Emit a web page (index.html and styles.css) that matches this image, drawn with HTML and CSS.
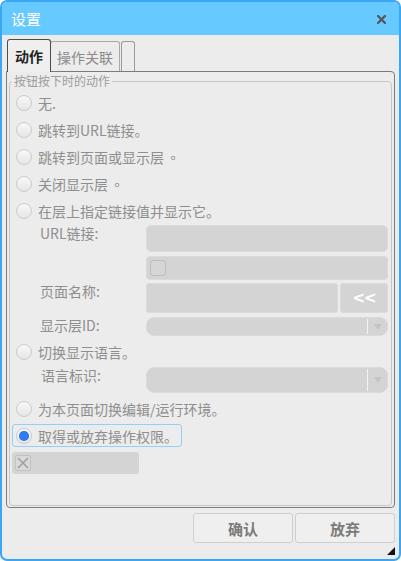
FILE: index.html
```html
<!DOCTYPE html>
<html lang="zh">
<head>
<meta charset="utf-8">
<title>设置</title>
<link rel="stylesheet" href="styles.css">
</head>
<body>
<div class="window">
  <div class="titlebar">
    <span class="title">设置</span>
    <svg class="close" width="9" height="9" viewBox="0 0 9 9"><path d="M1 1L8 8M8 1L1 8" stroke="#555" stroke-width="2.2" stroke-linecap="square"/></svg>
  </div>
  <div class="main">
    <div class="tabs">
      <div class="tab active">动作</div>
      <div class="tab second">操作关联</div>
      <div class="tab stub"></div>
    </div>
    <div class="panel">
      <fieldset class="group">
        <legend>按钮按下时的动作</legend>
        <div class="radio-row"><span class="radio"></span>无.</div>
        <div class="radio-row"><span class="radio"></span>跳转到URL链接。</div>
        <div class="radio-row"><span class="radio"></span>跳转到页面或显示层<span class="tc">。</span></div>
        <div class="radio-row"><span class="radio"></span>关闭显示层<span class="tc">。</span></div>
        <div class="radio-row"><span class="radio"></span>在层上指定链接值并显示它。</div>
        <div class="field url"><span class="label">URL链接:</span><div class="input"></div></div>
        <div class="field cb"><span class="label"></span><div class="input"><span class="checkbox"></span></div></div>
        <div class="field page"><span class="label">页面名称:</span><div class="input"></div><div class="btn-small">&lt;&lt;</div></div>
        <div class="field layer"><span class="label">显示层ID:</span><div class="select"><span class="sel-div"></span><span class="arrow"></span></div></div>
        <div class="radio-row mt2"><span class="radio"></span>切换显示语言。</div>
        <div class="field lang"><span class="label">语言标识:</span><div class="select"><span class="sel-div"></span><span class="arrow"></span></div></div>
        <div class="radio-row mt2"><span class="radio"></span>为本页面切换编辑/运行环境。</div>
        <div class="radio-row selected"><span class="radio checked"></span>取得或放弃操作权限。</div>
        <div class="xbox"><span class="xcheck"><svg width="14" height="14" viewBox="0 0 14 14"><path d="M2 2L12 12M12 2L2 12" stroke="#a0a0a0" stroke-width="1.6"/></svg></span></div>
      </fieldset>
    </div>
    <div class="buttons">
      <button class="btn">确认</button>
      <button class="btn">放弃</button>
    </div>
  </div>
  <div class="grip"></div>
</div>
</body>
</html>
```

FILE: styles.css
```css
html, body {
  margin: 0;
  padding: 0;
  background: #ffffff;
}
body {
  font-family: "Noto Sans CJK SC", "Noto Sans", sans-serif;
}
.window {
  width: 401px;
  height: 561px;
  box-sizing: border-box;
  border: 2px solid #3aa6f4;
  border-radius: 7px;
  background: #ececec;
  display: flex;
  flex-direction: column;
  position: relative;
  overflow: hidden;
}
.titlebar {
  flex: none;
  height: 33px;
  box-sizing: border-box;
  background: #66c9ff;
  display: flex;
  align-items: center;
  justify-content: space-between;
  padding: 1px 13px 0 9px;
}
.title {
  color: #ffffff;
  font-size: 15px;
  line-height: 18px;
}
.close {
  display: block;
}
.main {
  padding: 4px 4px 0 4px;
  display: flex;
  flex-direction: column;
}
.tabs {
  display: flex;
  align-items: flex-end;
  height: 32px;
  margin-left: 1px;
}
.tab {
  box-sizing: border-box;
  height: 30px;
  border: 1px solid #a9a9a9;
  border-bottom: none;
  border-radius: 3px 3px 0 0;
  font-size: 14px;
  color: #8a8a8a;
  display: flex;
  align-items: center;
  justify-content: center;
  background: #ececec;
}
.tab.active {
  height: 33px;
  width: 44px;
  border-color: #4d4d4d;
  color: #222222;
  font-weight: bold;
  margin-bottom: -1px;
  position: relative;
  z-index: 1;
  background: #efefef;
}
.tab.second {
  width: 70px;
  margin-left: -1px;
}
.tab.stub {
  width: 14px;
  margin-left: 1px;
  border-color: #9a9a9a;
}
.panel {
  box-sizing: border-box;
  height: 437px;
  border: 1px solid #7b7b7b;
  border-radius: 0 4px 4px 4px;
  display: flex;
  flex-direction: column;
}
.group {
  margin: 2px 2px 1px 2px;
  padding: 1px 0 0 0;
  border: 1px solid #c6c6c6;
  border-radius: 4px;
  flex: 1;
  min-width: 0;
}
.group legend {
  font-size: 12px;
  line-height: 14px;
  color: #9c9c9c;
  padding: 0 2px;
  margin-left: 2px;
}
.radio-row {
  height: 27px;
  display: flex;
  align-items: center;
  padding-left: 6px;
  font-size: 14px;
  color: #8e8e8e;
  white-space: nowrap;
}
.tc {
  font-family: "Noto Sans CJK TC", sans-serif;
  margin-left: 2px;
}
.radio-row.mt2 {
  margin-top: 2px;
}
.radio {
  width: 16px;
  height: 16px;
  box-sizing: border-box;
  border: 1px solid #cbcbcb;
  border-radius: 50%;
  background: linear-gradient(#f8f8f8, #e6e6e6);
  margin-right: 6px;
  flex: none;
  display: flex;
  align-items: center;
  justify-content: center;
}
.radio.checked::after {
  content: "";
  width: 8px;
  height: 8px;
  border-radius: 50%;
  background: #2f7df6;
  box-shadow: 0 0 0 1px #2a6fd6;
}
.radio-row.selected {
  margin-top: 2px;
  margin-left: 2px;
  width: 170px;
  height: 23px;
  box-sizing: border-box;
  border: 1px solid #8fd1f8;
  border-radius: 3px;
  padding-left: 3px;
}
.field {
  display: flex;
  padding-left: 30px;
  padding-right: 3px;
}
.label {
  width: 106px;
  flex: none;
  font-size: 14px;
  line-height: 16px;
  color: #8e8e8e;
}
.input {
  flex: 1;
  box-sizing: border-box;
  border: 1px solid #dadada;
  border-radius: 5px;
  background: #d4d4d4;
}
.field.url {
  margin-top: 1px;
}
.field.url .input {
  height: 27px;
}
.field.cb {
  margin-top: 4px;
}
.field.cb .input {
  height: 24px;
  display: flex;
  align-items: center;
  padding-left: 3px;
  border-radius: 4px;
}
.checkbox {
  width: 16px;
  height: 16px;
  box-sizing: border-box;
  border: 1px solid #bdbdbd;
  border-radius: 3px;
  background: #d6d6d6;
}
.field.page {
  margin-top: 3px;
}
.field.page .input {
  height: 30px;
  border-radius: 3px;
}
.btn-small {
  width: 48px;
  height: 30px;
  box-sizing: border-box;
  margin-left: 2px;
  border: 1px solid #dadada;
  border-radius: 3px;
  background: #d4d4d4;
  color: #ffffff;
  font-weight: bold;
  font-size: 15px;
  display: flex;
  align-items: center;
  justify-content: center;
  letter-spacing: -1px;
  font-family: "DejaVu Sans", sans-serif;
}
.select {
  flex: 1;
  box-sizing: border-box;
  border: 1px solid #dadada;
  border-radius: 8px;
  background: #d4d4d4;
  display: flex;
  justify-content: flex-end;
  align-items: center;
}
.field.layer {
  margin-top: 4px;
}
.field.layer .select {
  height: 19px;
}
.field.lang {
  margin-top: 2px;
}
.field.lang .label {
  padding-left: 1px;
  width: 105px;
}
.field.lang .select {
  height: 26px;
}
.sel-div {
  align-self: stretch;
  width: 1px;
  background: #f2f2f2;
  margin: 1px 0;
}
.arrow {
  width: 19px;
  display: flex;
  justify-content: center;
}
.arrow::before {
  content: "";
  width: 0;
  height: 0;
  border-left: 4px solid transparent;
  border-right: 4px solid transparent;
  border-top: 6px solid #c4c4c4;
}
.xbox {
  margin-top: 5px;
  margin-left: 2px;
  width: 127px;
  height: 22px;
  border-radius: 3px;
  background: #d4d4d4;
  display: flex;
  align-items: center;
  padding-left: 3px;
  box-sizing: border-box;
}
.xcheck {
  width: 16px;
  height: 16px;
  box-sizing: border-box;
  border: 1px solid #c2c2c2;
  border-radius: 2px;
  background: #d9d9d9;
  display: flex;
  align-items: center;
  justify-content: center;
}
.xcheck svg {
  display: block;
}
.buttons {
  display: flex;
  justify-content: flex-end;
  gap: 2px;
  margin-top: 5px;
}
.btn {
  width: 100px;
  height: 30px;
  box-sizing: border-box;
  border: 1px solid #cfcfcf;
  border-radius: 3px;
  background: #efefef;
  font-family: inherit;
  font-size: 15px;
  font-weight: bold;
  color: #7b7b7b;
  padding: 0;
}
.grip {
  position: absolute;
  right: 4px;
  bottom: 4px;
  width: 8px;
  height: 8px;
  background: #111111;
  clip-path: polygon(100% 0, 100% 100%, 0 100%);
}
```
